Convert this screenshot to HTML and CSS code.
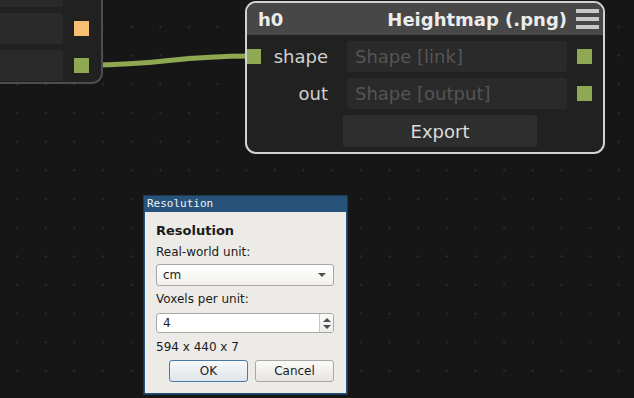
FILE: index.html
```html
<!DOCTYPE html>
<html lang="en">
<head>
  <meta charset="UTF-8">
  <title>Heightmap export</title>
  <link rel="stylesheet" href="styles.css">
</head>
<body>
  <div class="canvas">
    <svg class="wires" width="634" height="398">
      <path d="M89 65 C 170 65, 168 56, 252 56" />
    </svg>

    <div class="node node-prev">
      <div class="prow"><div class="pfield"></div><span class="port"></span></div>
      <div class="prow"><div class="pfield"></div><span class="port orange"></span></div>
      <div class="prow"><div class="pfield"></div><span class="port"></span></div>
    </div>

    <div class="node node-h0">
      <div class="head">
        <span class="name">h0</span>
        <span class="kind">Heightmap (.png)</span>
        <svg class="menu" width="23" height="21" viewBox="0 0 23 21">
          <rect x="0" y="0" width="23" height="4" />
          <rect x="0" y="8" width="23" height="4" />
          <rect x="0" y="16" width="23" height="4" />
        </svg>
      </div>
      <div class="rows">
        <div class="row">
          <span class="port in"></span>
          <span class="label">shape</span>
          <div class="field">Shape [link]</div>
          <span class="port out"></span>
        </div>
        <div class="row">
          <span></span>
          <span class="label">out</span>
          <div class="field">Shape [output]</div>
          <span class="port out"></span>
        </div>
        <div class="btnrow">
          <button class="export">Export</button>
        </div>
      </div>
    </div>

    <div class="dialog">
      <div class="titlebar">Resolution</div>
      <div class="dbody">
        <div class="dhead">Resolution</div>
        <div class="dlabel">Real-world unit:</div>
        <div class="combo">cm<span class="caret"></span></div>
        <div class="dlabel">Voxels per unit:</div>
        <div class="spin">
          <span class="val">4</span>
          <span class="arrows"><i class="up"></i><i class="down"></i></span>
        </div>
        <div class="dsize">594 x 440 x 7</div>
        <div class="dbuttons">
          <button class="dbtn ok">OK</button>
          <button class="dbtn">Cancel</button>
        </div>
      </div>
    </div>
  </div>
</body>
</html>
```

FILE: styles.css
```css
body {
  margin: 0;
  background: #161616;
  font-family: 'DejaVu Sans', sans-serif;
  overflow: hidden;
}
.canvas {
  position: relative;
  width: 634px;
  height: 398px;
  overflow: hidden;
  background-color: #161616;
  background-image: radial-gradient(circle, #383838 0.7px, transparent 1.2px);
  background-size: 28.67px 28.67px;
  background-position: 2.67px 12.67px;
}
.wires {
  position: absolute;
  left: 0;
  top: 0;
}
.wires path {
  fill: none;
  stroke: #8fa852;
  stroke-width: 5;
}

/* nodes */
.node {
  position: absolute;
  box-sizing: border-box;
  background: #212121;
  border-radius: 11px;
}
.port {
  display: block;
  width: 15px;
  height: 15px;
  background: #8fa852;
}
.port.orange { background: #f5c073; }

.node-prev {
  left: -200px;
  top: -40px;
  width: 303px;
  height: 124px;
  border: 2px solid #4d4d4d;
  display: flex;
  flex-direction: column;
  justify-content: flex-end;
  gap: 6px;
  padding-bottom: 1px;
}
.prow {
  display: flex;
  align-items: center;
  height: 31px;
}
.pfield {
  flex: 1;
  height: 100%;
  background: #2a2a2a;
  border-radius: 3px;
}
.prow .port {
  margin: 0 12px 0 11px;
}

.node-h0 {
  left: 245px;
  top: 1px;
  width: 360px;
  height: 153px;
  border: 2px solid #d2d2d2;
  overflow: hidden;
}
.head {
  display: flex;
  align-items: center;
  height: 32px;
  background: #474747;
  padding: 0 4px 0 11px;
  color: #ececec;
  font-weight: bold;
  font-size: 18px;
}
.head .kind {
  margin-left: auto;
  margin-right: 9px;
}
.menu rect { fill: #c8c8c8; }

.rows {
  display: flex;
  flex-direction: column;
  gap: 6px;
  padding-top: 6px;
}
.row {
  display: grid;
  grid-template-columns: 15px 85px 220px 36px;
  align-items: center;
  height: 31px;
}
.row .port.in { margin-left: -1px; }
.row .port.out { margin-left: 10px; }
.label {
  text-align: right;
  padding-right: 19px;
  color: #cfcfcf;
  font-size: 18px;
}
.field {
  height: 31px;
  line-height: 31px;
  background: #2a2a2a;
  border-radius: 3px;
  padding-left: 8px;
  color: #555;
  font-size: 18px;
  box-sizing: border-box;
}
.btnrow {
  padding-left: 96px;
}
.export {
  width: 194px;
  height: 32px;
  border: none;
  border-radius: 2px;
  background: #2e2e2e;
  color: #dcdcdc;
  font-family: 'DejaVu Sans', sans-serif;
  font-size: 18px;
  padding: 0;
}

/* dialog */
.dialog {
  position: absolute;
  left: 143px;
  top: 195px;
  width: 205px;
  height: 200px;
  box-sizing: border-box;
  border: 1px solid #1c3954;
  background: #27527a;
  display: flex;
  flex-direction: column;
  padding: 0 1px 1px 1px;
}
.titlebar {
  height: 16px;
  line-height: 15px;
  padding-left: 2px;
  color: #eef2f6;
  font-family: 'DejaVu Sans Mono', monospace;
  font-size: 11px;
}
.dbody {
  flex: 1;
  background: #edebe7;
  padding: 11px 12px 0 11px;
  color: #1b1b1b;
  font-size: 12px;
}
.dhead {
  font-weight: bold;
  font-size: 13px;
  line-height: 16px;
}
.dlabel {
  line-height: 16px;
  margin-top: 5px;
}
.combo {
  position: relative;
  margin-top: 4px;
  height: 22px;
  line-height: 20px;
  box-sizing: border-box;
  border: 1px solid #a9a7a3;
  border-radius: 3px;
  background: linear-gradient(#ffffff, #f1f0ee);
  padding-left: 6px;
}
.caret {
  position: absolute;
  right: 7px;
  top: 8px;
  border-left: 4px solid transparent;
  border-right: 4px solid transparent;
  border-top: 4px solid #4e4e4e;
}
.combo + .dlabel { margin-top: 5px; }
.spin {
  display: flex;
  margin-top: 6px;
  height: 20px;
  box-sizing: border-box;
  border: 1px solid #a9a7a3;
  border-radius: 3px;
  background: #fff;
  overflow: hidden;
}
.spin .val {
  flex: 1;
  padding-left: 6px;
  line-height: 18px;
}
.arrows {
  width: 13px;
  border-left: 1px solid #c9c7c3;
  background: linear-gradient(#fafafa, #ecebe9);
  display: flex;
  flex-direction: column;
  align-items: center;
  justify-content: center;
  gap: 3px;
}
.arrows i {
  display: block;
  border-left: 4px solid transparent;
  border-right: 4px solid transparent;
}
.arrows .up { border-bottom: 4px solid #4e4e4e; }
.arrows .down { border-top: 4px solid #4e4e4e; }
.dsize {
  margin-top: 6px;
  line-height: 16px;
}
.dbuttons {
  display: flex;
  justify-content: flex-end;
  gap: 7px;
  margin-top: 5px;
}
.dbtn {
  width: 79px;
  height: 22px;
  padding: 0;
  border: 1px solid #a9a7a3;
  border-radius: 3px;
  background: linear-gradient(#fbfbfa, #e6e4e0);
  color: #1b1b1b;
  font-family: 'DejaVu Sans', sans-serif;
  font-size: 12px;
}
.dbtn.ok {
  border-color: #4a7aa6;
  background: linear-gradient(#f7f9fb, #dfe5ea);
}
```
